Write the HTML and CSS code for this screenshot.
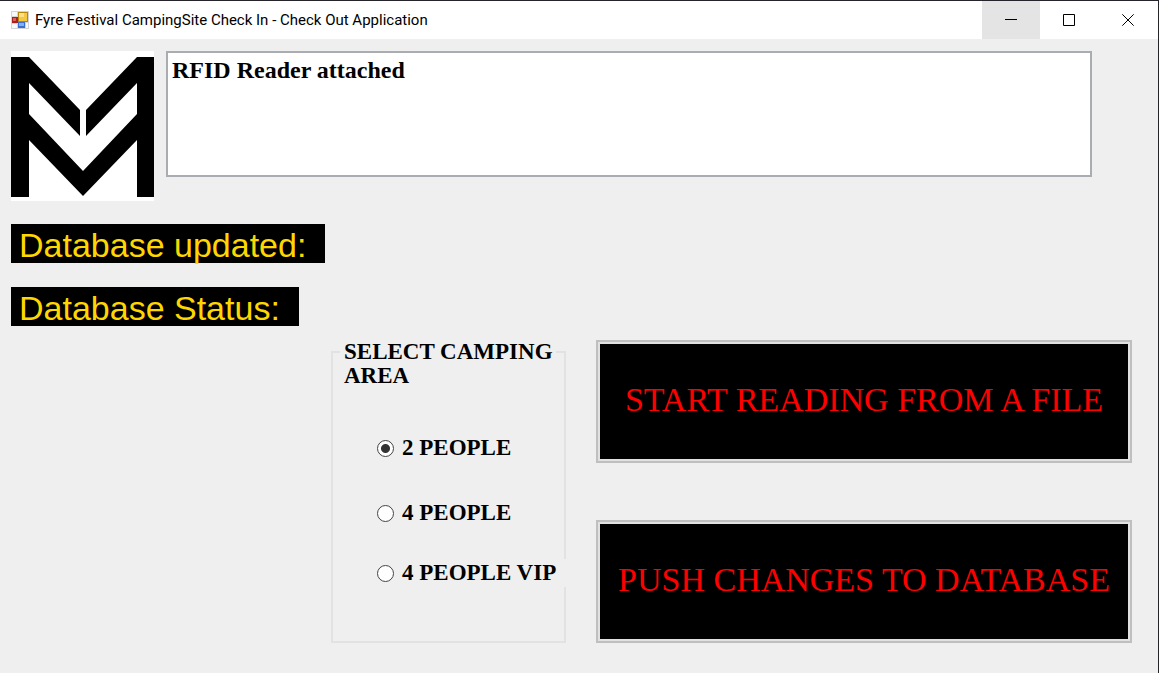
FILE: index.html
```html
<!DOCTYPE html>
<html lang="en">
<head>
<meta charset="utf-8">
<title>Fyre Festival CampingSite Check In - Check Out Application</title>
<link rel="stylesheet" href="styles.css">
</head>
<body>
<div class="window">
  <header class="titlebar">
    <svg class="app-icon" viewBox="0 0 18 18" aria-hidden="true">
      <rect width="18" height="18" fill="#d4d4d6"/>
      <path d="M1 1h5v4H1zM1 13h5v4H1zM15 12h2v5h-2z" fill="#f8f8f8"/>
      <rect x="7" y="1" width="10" height="10" fill="#b8860b"/>
      <rect x="8" y="2" width="8" height="8" fill="#f5c842"/>
      <rect x="8" y="2" width="5" height="4" fill="#fce08a"/>
      <rect x="1" y="6" width="6" height="6" fill="#a8201c"/>
      <rect x="2" y="7" width="3" height="3" fill="#dc6058"/>
      <rect x="7" y="11" width="7" height="6" fill="#3a6fd0"/>
      <rect x="8" y="12" width="5" height="3" fill="#84b0f4"/>
    </svg>
    <h1 class="title">Fyre Festival CampingSite Check In - Check Out Application</h1>
    <div class="controls">
      <button class="control control-active" type="button" aria-label="Minimize">
        <svg viewBox="0 0 12 12"><path d="M0 5.500h12"/></svg>
      </button>
      <button class="control" type="button" aria-label="Maximize">
        <svg viewBox="0 0 12 12"><path d="M.5.500h11v11H.5z"/></svg>
      </button>
      <button class="control" type="button" aria-label="Close">
        <svg viewBox="0 0 12 12"><path d="M.3.300l11.400 11.400M11.700.300L.3 11.700"/></svg>
      </button>
    </div>
  </header>
  <main class="content">
    <section class="top">
      <svg class="logo" viewBox="0 0 143 150" role="img" aria-label="Logo">
        <rect width="143" height="150" fill="#fff"/>
        <path d="M0 6H18L69 59V85L18 32V63L72 120L126 63V32L75 85V59L126 6H143V146H126V89L72 145L18 89V146H0Z"/>
      </svg>
      <textarea class="log" aria-label="Log" spellcheck="false">RFID Reader attached</textarea>
    </section>
    <section class="statuses">
      <p class="status">Database updated:</p>
      <p class="status">Database Status:</p>
    </section>
    <section class="bottom">
      <fieldset class="areas">
        <legend class="legend">SELECT CAMPING AREA</legend>
        <label class="area"><input class="radio" type="radio" name="area" checked>2 PEOPLE</label>
        <label class="area area-second"><input class="radio" type="radio" name="area">4 PEOPLE</label>
        <label class="area area-third"><input class="radio" type="radio" name="area">4 PEOPLE VIP</label>
      </fieldset>
      <div class="actions">
        <button class="action" type="button">START READING FROM A FILE</button>
        <button class="action" type="button">PUSH CHANGES TO DATABASE</button>
      </div>
    </section>
  </main>
</div>
</body>
</html>
```
FILE: styles.css
```css
* { box-sizing: border-box; }
body { margin: 0; background: #efefef; }
.window {
  min-height: 100vh;
  border-top: 1px solid #24242a;
  border-right: 1px solid #24242a;
}
.titlebar {
  display: flex;
  align-items: center;
  height: 38px;
  padding-left: 11px;
  background: #fff;
}
.app-icon { width: 18px; height: 18px; }
.title {
  flex: 1;
  margin: 0 0 0 6px;
  font: 400 15px/20px Roboto, "Noto Sans", sans-serif;
  color: #000;
}
.controls { display: flex; align-self: stretch; }
.control {
  display: flex;
  align-items: center;
  justify-content: center;
  width: 58px;
  padding: 0;
  border: 0;
  background: none;
}
.control:last-child { width: 60px; }
.control-active { background: #e4e4e4; }
.control svg { width: 12px; height: 12px; fill: none; stroke: #000; }
.content { padding: 12px 26px 30px 11px; }
.top { display: flex; gap: 12px; padding-right: 40px; align-items: flex-start; }
.logo { flex: none; width: 143px; height: 150px; }
.log {
  flex: 1;
  height: 126px;
  padding: 4px;
  border: 2px solid #a9adb2;
  outline: 0;
  resize: none;
  background: #fff;
  color: #000;
  font: 700 24px/26px "Liberation Serif", serif;
}
.statuses {
  display: flex;
  flex-direction: column;
  align-items: flex-start;
  gap: 24px;
  margin-top: 23px;
}
.status {
  margin: 0;
  padding: 3px 19px 0 8px;
  background: #000;
  color: #ffd700;
  font: 34px/36px "Liberation Sans", sans-serif;
}
.bottom { display: flex; gap: 30px; margin: 14px 0 0 320px; }
.areas {
  flex: none;
  width: 235px;
  min-width: 0;
  margin: 0;
  padding: 70px 0 0 40px;
  border: 2px solid #e2e2e2;
  font: 700 23px/24px "Liberation Serif", serif;
  color: #000;
}
.legend {
  width: 216px;
  height: 24px;
  margin-left: -33px;
  padding: 0 0 0 4px;
}
.area {
  display: flex;
  align-items: center;
  gap: 8px;
  width: 185px;
  height: 28px;
  padding-left: 4px;
  background: #efefef;
  white-space: nowrap;
}
.area-second { margin-top: 37px; }
.area-third { width: 194px; margin-top: 32px; }
.radio {
  appearance: none;
  flex: none;
  width: 17px;
  height: 17px;
  margin: 0;
  border: 1px solid #444;
  border-radius: 50%;
  background: #fff;
}
.radio:checked { background: radial-gradient(circle, #333 4px, #fff 5px); }
.actions { display: flex; flex: 1; flex-direction: column; gap: 57px; }
.action {
  height: 123px;
  padding: 0 0 4px;
  border: 2px solid #bfbfbf;
  background: #000;
  box-shadow: inset 0 0 0 2px #e1e1e1;
  color: #f00;
  font: 400 34px/36px "Liberation Serif", serif;
}
```
